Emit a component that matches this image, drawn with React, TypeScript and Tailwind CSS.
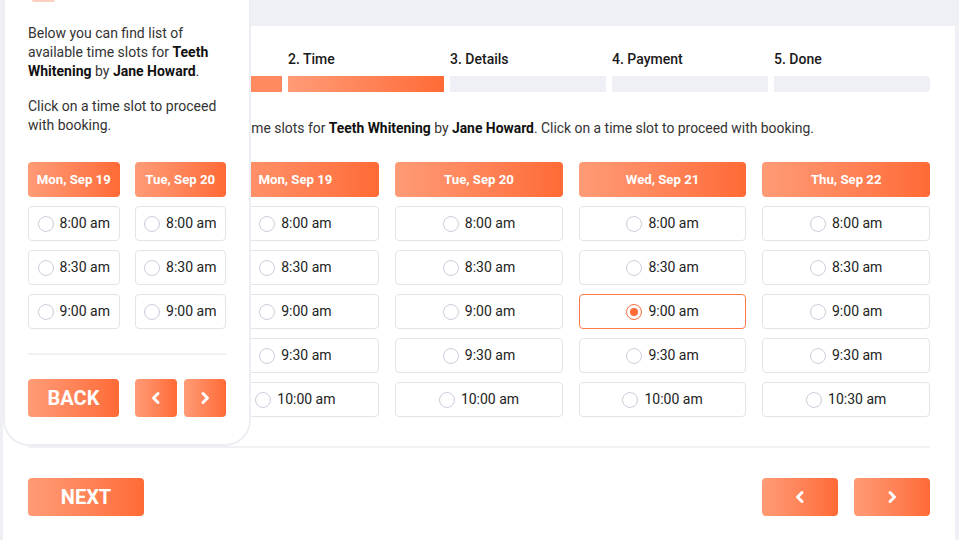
import React from "react";

const grad = "bg-gradient-to-r from-[#ff9b76] to-[#ff6a35]";

function Radio({ checked }: { checked?: boolean }) {
  return checked ? (
    <span className="flex h-4 w-4 items-center justify-center rounded-full border border-[#ff6b35]">
      <span className="h-[8px] w-[8px] rounded-full bg-[#ff6b35]" />
    </span>
  ) : (
    <span className="h-4 w-4 rounded-full border border-[#c8ceda]" />
  );
}

function Slot({ t, checked }: { t: string; checked?: boolean }) {
  return (
    <div
      className={
        "flex h-[35px] items-center justify-center gap-[6px] rounded-[4px] border bg-white text-[14px] text-[#222] " +
        (checked ? "border-[#ff7a47]" : "border-[#e1e4eb]")
      }
    >
      <Radio checked={checked} />
      <span>{t}</span>
    </div>
  );
}

function DayHeader({ d }: { d: string }) {
  return (
    <div className={"flex h-[35px] items-center justify-center rounded-[4px] text-[13.2px] font-bold text-white " + grad}>
      {d}
    </div>
  );
}

function Chevron({ left }: { left?: boolean }) {
  return (
    <svg width="10" height="14" viewBox="0 0 10 14" fill="none">
      <path
        d={left ? "M7 2.5 L2.5 7 L7 11.5" : "M3 2.5 L7.5 7 L3 11.5"}
        stroke="white"
        strokeWidth="3"
        strokeLinecap="round"
        strokeLinejoin="round"
      />
    </svg>
  );
}

const cols: { d: string; slots: string[]; sel?: number }[] = [
  { d: "Fri, Sep 16", slots: ["8:00 am", "8:30 am", "9:00 am", "9:30 am", "10:00 am"] },
  { d: "Mon, Sep 19", slots: ["8:00 am", "8:30 am", "9:00 am", "9:30 am", "10:00 am"] },
  { d: "Tue, Sep 20", slots: ["8:00 am", "8:30 am", "9:00 am", "9:30 am", "10:00 am"] },
  { d: "Wed, Sep 21", slots: ["8:00 am", "8:30 am", "9:00 am", "9:30 am", "10:00 am"], sel: 2 },
  { d: "Thu, Sep 22", slots: ["8:00 am", "8:30 am", "9:00 am", "9:30 am", "10:30 am"] },
];

const steps = ["1. Service", "2. Time", "3. Details", "4. Payment", "5. Done"];

export default function App() {
  return (
    <div className="relative h-[540px] w-[959px] overflow-hidden bg-[#eff0f5] font-['Roboto',sans-serif] text-[#222]">
      <div className="pl-[3px] pt-[26px]">
        <div className="h-[514px] w-[952px] bg-white px-[25px] pt-[25px]">
          <div className="flex gap-[6px]">
            {steps.map((s, i) => (
              <div key={s} className={i === 0 ? "flex-1" : "w-[156px]"}>
                <div className="h-[16px] text-[14px] font-medium leading-[16px] text-[#1a1a1a]">{s}</div>
                <div
                  className={
                    "mt-[9px] h-[16px] " +
                    (i === 0 ? "rounded-l-[4px] bg-[#ff8a5f] " : "") +
                    (i === 1 ? grad + " " : "") +
                    (i > 1 ? "bg-[#eff0f5] " : "") +
                    (i === 4 ? "rounded-r-[4px]" : "")
                  }
                />
              </div>
            ))}
          </div>
          <p className="mt-[28px] text-[13.9px] leading-[16px] text-[#333]">
            Below you can find list of available time slots for <b className="text-[#111]">Teeth Whitening</b> by{" "}
            <b className="text-[#111]">Jane Howard</b>. Click on a time slot to proceed with booking.
          </p>
          <div className="mt-[26px] grid grid-cols-5 gap-x-[16px]">
            {cols.map((c) => (
              <div key={c.d} className="flex flex-col gap-[9px]">
                <DayHeader d={c.d} />
                {c.slots.map((t, j) => (
                  <Slot key={t} t={t} checked={c.sel === j} />
                ))}
              </div>
            ))}
          </div>
          <div className="mt-[29px] border-t-2 border-[#f0f1f5]" />
          <div className="mt-[30px] flex items-center">
            <button className={"flex h-[38px] w-[116px] items-center justify-center rounded-[4px] text-[20px] font-bold text-white " + grad}>
              NEXT
            </button>
            <div className="ml-auto flex gap-[16px]">
              <button className={"flex h-[38px] w-[76px] items-center justify-center rounded-[4px] " + grad}>
                <Chevron left />
              </button>
              <button className={"flex h-[38px] w-[76px] items-center justify-center rounded-[4px] " + grad}>
                <Chevron />
              </button>
            </div>
          </div>
        </div>
      </div>

      {/* overlay mobile card */}
      <div className="absolute left-[3px] top-0 h-[446px] w-[248px] rounded-b-[26px] border-2 border-t-0 border-[#eceef3] bg-white px-[23px]">
        <div className="ml-[4px] h-[2px] w-[23px] rounded-b-[2px] bg-[#fcd0bf]" />
        <div className="mt-[22px] text-[14px] leading-[19px] text-[#333]">
          <p>
            Below you can find list of available time slots for <b className="text-[#111]">Teeth Whitening</b> by{" "}
            <b className="text-[#111]">Jane Howard</b>.
          </p>
          <p className="mt-[16px]">Click on a time slot to proceed with booking.</p>
        </div>
        <div className="mt-[27px] grid grid-cols-2 gap-x-[15px]">
          {cols.slice(1, 3).map((c) => (
            <div key={c.d} className="flex flex-col gap-[9px]">
              <DayHeader d={c.d} />
              {c.slots.slice(0, 3).map((t) => (
                <Slot key={t} t={t} />
              ))}
            </div>
          ))}
        </div>
        <div className="mt-[24px] border-t-2 border-[#f0f1f5]" />
        <div className="mt-[24px] flex">
          <button className={"flex h-[38px] w-[91px] items-center justify-center rounded-[4px] text-[20px] font-bold text-white " + grad}>
            BACK
          </button>
          <div className="ml-auto flex gap-[7px]">
            <button className={"flex h-[38px] w-[42px] items-center justify-center rounded-[4px] " + grad}>
              <Chevron left />
            </button>
            <button className={"flex h-[38px] w-[42px] items-center justify-center rounded-[4px] " + grad}>
              <Chevron />
            </button>
          </div>
        </div>
      </div>
    </div>
  );
}
